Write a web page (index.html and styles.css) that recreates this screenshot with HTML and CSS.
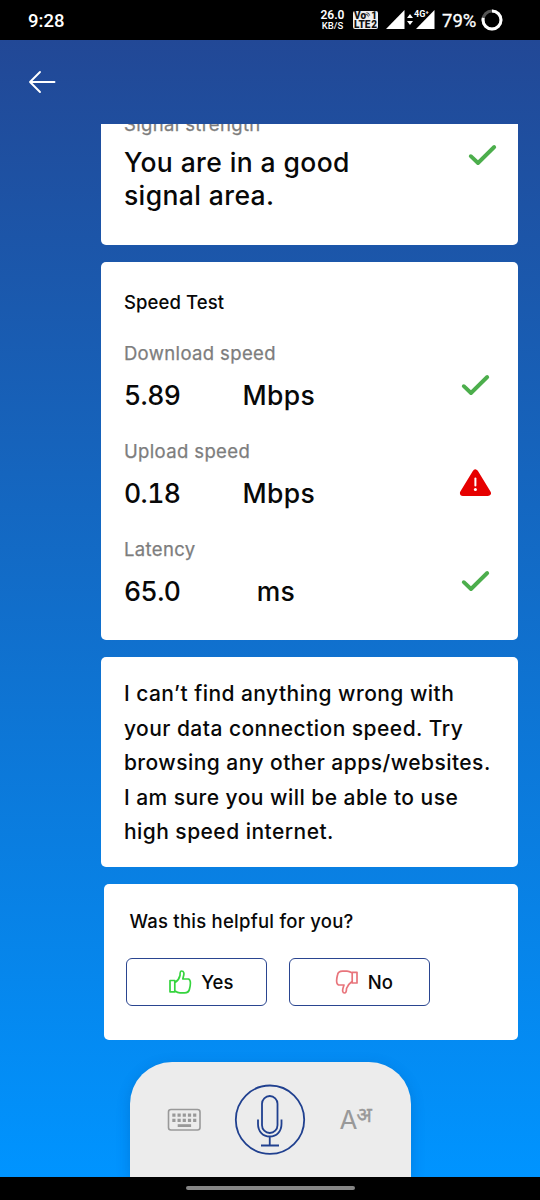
FILE: index.html
```html
<!DOCTYPE html>
<html lang="en">
<head>
<meta charset="utf-8">
<title>Speed Test</title>
<link rel="stylesheet" href="styles.css">
</head>
<body>
<div class="screen">
  <header class="status">
    <span class="clock">9:28</span>
    <div class="indicators">
      <div class="rate"><b>26.0</b><span>KB/S</span></div>
      <div class="volte"><span class="volte-row"><span>Vo<small>))</small></span><span>1</span></span><span class="volte-row"><span>LTE</span><span>2</span></span></div>
      <svg class="signal" viewBox="0 0 50 22">
        <path d="M0 20H18.500V1Z" fill="#fff"/>
        <path d="M21 9L24 5L27 9ZM21 12L24 16L27 12Z" fill="#fff"/>
        <path d="M30 20H48.500V1Z" fill="#fff"/>
        <text class="net" x="28" y="7.500">4G⁺</text>
      </svg>
      <span class="percent">79%</span>
      <svg class="battery" viewBox="0 0 22 22">
        <circle cx="11" cy="11" r="9" fill="none" stroke="#555" stroke-width="3"/>
        <circle cx="11" cy="11" r="9" fill="none" stroke="#fff" stroke-width="3" pathLength="100" stroke-dasharray="79 100" transform="rotate(-90 11 11)"/>
      </svg>
    </div>
  </header>

  <main class="app">
    <div class="toolbar">
      <svg class="back" viewBox="0 0 28 24"><path d="M26.500 12H2M12 2L2 12L12 22" fill="none" stroke="#fff" stroke-width="1.900" stroke-linecap="round" stroke-linejoin="round"/></svg>
    </div>

    <div class="chat">
      <section class="card signal-card">
        <div class="signal-copy">
          <div class="label">Signal strength</div>
          <div class="signal-text">You are in a good<br>signal area.</div>
        </div>
        <svg class="state" viewBox="0 0 32 32"><path d="M4.800 17.200L12 24L28.200 8" fill="none" stroke="#4cae4c" stroke-width="3.900" stroke-linecap="round" stroke-linejoin="round"/></svg>
      </section>

      <section class="card speed-card">
        <h2 class="title">Speed Test</h2>
        <div class="metric">
          <div>
            <div class="label">Download speed</div>
            <div class="reading"><span>5.89</span><span class="unit">Mbps</span></div>
          </div>
          <svg class="state" viewBox="0 0 32 32"><path d="M4.800 17.200L12 24L28.200 8" fill="none" stroke="#4cae4c" stroke-width="3.900" stroke-linecap="round" stroke-linejoin="round"/></svg>
        </div>
        <div class="metric">
          <div>
            <div class="label">Upload speed</div>
            <div class="reading"><span>0.18</span><span class="unit">Mbps</span></div>
          </div>
          <svg class="state" viewBox="0 0 32 32"><path d="M16.400 5.500L28.900 26H3.900Z" fill="#e60000" stroke="#e60000" stroke-width="6" stroke-linejoin="round"/><path d="M16.400 11.500V18.500" stroke="#fff" stroke-width="2" stroke-linecap="round"/><circle cx="16.400" cy="22.500" r="1.500" fill="#fff"/></svg>
        </div>
        <div class="metric">
          <div>
            <div class="label">Latency</div>
            <div class="reading"><span>65.0</span><span class="unit unit-ms">ms</span></div>
          </div>
          <svg class="state" viewBox="0 0 32 32"><path d="M4.800 17.200L12 24L28.200 8" fill="none" stroke="#4cae4c" stroke-width="3.900" stroke-linecap="round" stroke-linejoin="round"/></svg>
        </div>
      </section>

      <section class="card message">I can’t find anything wrong with<br>your data connection speed. Try<br>browsing any other apps/websites.<br>I am sure you will be able to use<br>high speed internet.</section>

      <section class="card feedback">
        <p class="question">Was this helpful for you?</p>
        <div class="choices">
          <button class="choice">
            <svg class="thumb" viewBox="0 0 24 26"><path d="M2 11.500H6.800V22.800H2ZM7 13.500C10 11.500 11.500 9 12 6.500C12 4 12 2 13.500 2C16 2 16.400 4.500 15.400 7.500L14.800 10H20.500C23.500 11 22.500 16 21.500 20C21 23 19.500 23.800 16.500 23.800H12C10 23.800 8.500 23 7 22" fill="none" stroke="#35d43e" stroke-width="1.700" stroke-linejoin="round" stroke-linecap="round"/></svg>
            <span>Yes</span>
          </button>
          <button class="choice">
            <svg class="thumb" viewBox="0 0 24 26"><path d="M22 3.300H17.200V14H22ZM17 12.500C14 14.500 12.500 17 11.500 19.500C11.500 22 11 24 9.500 24C7.500 24 7.200 21.500 8.200 18.500L9 16H3.500C.9 15 1.500 10 2.500 6C3 3 4.500 2.200 7.500 2.200H12C14 2.200 15.500 3 17 3.800" fill="none" stroke="#e8747b" stroke-width="1.700" stroke-linejoin="round" stroke-linecap="round"/></svg>
            <span>No</span>
          </button>
        </div>
      </section>
    </div>

    <div class="dock">
      <svg class="keyboard" viewBox="0 0 34 24">
        <rect x="1.500" y="1.500" width="31.500" height="20.500" rx="2.500" fill="none" stroke="#999" stroke-width="1.600"/>
        <path d="M5.300 7.200H29.500M5.300 12.400H29.500" stroke="#999" stroke-width="3.200" stroke-dasharray="3.200 2"/>
        <path d="M10.700 17.600H24.100" stroke="#999" stroke-width="2.800"/>
      </svg>
      <svg class="mic" viewBox="0 0 72 72">
        <g fill="none" stroke="#20408f" stroke-width="1.800">
          <circle cx="36" cy="35.700" r="34.200"/>
          <rect x="28" y="12" width="15.500" height="37" rx="7.750"/>
          <path d="M24 35.500V40C24 47.500 29 52.500 35.750 52.500S47.500 47.500 47.500 40V35.500M35.750 52.500V61.500M27 61.500H45"/>
        </g>
      </svg>
      <div class="language"><span class="latin">A</span><span class="hindi" lang="hi">अ</span></div>
    </div>
  </main>

  <footer class="navbar"><div class="handle"></div></footer>
</div>
</body>
</html>
```

FILE: styles.css
```css
* { box-sizing: border-box; }
body { margin: 0; font-family: Inter, "Liberation Sans", sans-serif; color: #080808; }
.screen { width: 540px; height: 1200px; display: flex; flex-direction: column; overflow: hidden; }

.status { height: 40px; background: #000; color: #fff; display: flex; align-items: center; justify-content: space-between; padding: 0 37px 0 28px; font-family: Roboto, sans-serif; }
.clock { font-size: 18.500px; font-weight: 500; padding-top: 1px; }
.indicators { display: flex; align-items: center; }
.rate { width: 25px; display: flex; flex-direction: column; align-items: center; font-size: 9.500px; line-height: 9px; font-weight: 500; margin-right: 8px; }
.rate b { font-size: 12px; line-height: 11px; font-weight: 600; }
.volte { width: 25px; height: 18px; border-radius: 2px; background: #eee; color: #111; font-size: 10px; line-height: 9px; font-weight: 900; padding: 0 1px; margin-right: 8px; }
.volte-row { display: flex; justify-content: space-between; }
.volte small { display: inline-block; font-size: 5px; line-height: 5px; vertical-align: 3px; transform: rotate(-45deg); }
.signal { width: 50px; height: 22px; margin-right: 6px; }
.net { font-size: 9px; font-weight: 700; fill: #fff; stroke: #000; stroke-width: 1.500px; paint-order: stroke; }
.percent { font-size: 18.500px; width: 34px; margin-right: 5px; padding-top: 1px; -webkit-text-stroke: .3px #fff; }
.battery { width: 22px; height: 22px; }

.app { flex: 1; min-height: 0; display: flex; flex-direction: column; background: linear-gradient(#224896, #0094ff); }
.toolbar { height: 84px; flex: none; padding: 30px 0 0 28px; }
.back { width: 28px; height: 24px; display: block; }
.chat { height: 938px; flex: none; overflow: hidden; padding: 0 22.500px 0 101.400px; display: flex; flex-direction: column; gap: 17px; }
.card { background: #fff; border-radius: 5px; flex: none; }

.signal-card { height: 151px; margin-top: -30px; padding: 18px 19.500px 0 22.500px; display: flex; justify-content: space-between; }
.signal-card .state { margin-top: 27px; }
.label { font-size: 18.500px; line-height: 24px; color: #7d7d7d; letter-spacing: .37px; -webkit-text-stroke: .25px #7d7d7d; }
.signal-text { margin-top: 10px; font-size: 26.500px; line-height: 33px; font-weight: 500; letter-spacing: .4px; }
.state { width: 32px; height: 32px; display: block; }

.speed-card { height: 378px; padding: 28px 26.500px 0 22.500px; display: flex; flex-direction: column; gap: 27px; }
.title { margin: 0; font-size: 18.500px; line-height: 24px; font-weight: 500; letter-spacing: .1px; }
.metric { display: flex; justify-content: space-between; }
.metric .state { margin-top: 28px; }
.reading { margin-top: 14px; display: grid; grid-template-columns: 100px 110px; font-size: 26.500px; line-height: 33px; font-weight: 500; font-variant-numeric: tabular-nums; letter-spacing: -.5px; }
.unit { text-align: center; letter-spacing: .35px; }
.unit-ms { padding-right: 6px; }

.message { height: 210px; padding: 20px 0 0 22.500px; font-size: 21px; line-height: 34.500px; white-space: nowrap; font-weight: 500; letter-spacing: .46px; }
.feedback { height: 155.500px; margin-left: 2.500px; padding: 25px 0 0 22.500px; }
.question { margin: 0 0 0 3px; font-size: 18.500px; line-height: 24px; font-weight: 500; letter-spacing: .25px; }
.choices { display: flex; gap: 22.500px; margin-top: 25px; }
.choice { width: 140.500px; height: 48px; border: 1.500px solid #2a4590; border-radius: 6px; background: #fff; padding: 0 0 0 8.500px; display: flex; align-items: center; justify-content: center; gap: 9px; font: 500 18.500px Inter, sans-serif; color: #080808; }
.thumb { width: 24px; height: 26px; }

.dock { width: 281px; height: 115px; margin-left: 129.500px; border-radius: 42px 42px 0 0; background: #ececec; box-shadow: 0 4px 14px rgba(0, 50, 120, .22); display: flex; align-items: center; justify-content: space-between; padding: 0 38px 0 37px; }
.keyboard { width: 34px; height: 24px; }
.mic { width: 72px; height: 72px; }
.language { color: #999; display: flex; align-items: flex-start; width: 33px; height: 28px; font-family: "Noto Sans", sans-serif; }
.latin { width: 17px; font: 400 26px/28px Inter, sans-serif; }
.hindi { font-size: 20px; line-height: 18px; -webkit-text-stroke: .4px #999; }

.navbar { height: 23px; background: #000; display: flex; justify-content: center; padding-top: 9px; z-index: 1; }
.handle { width: 169px; height: 4px; border-radius: 2px; background: #858585; }
```
